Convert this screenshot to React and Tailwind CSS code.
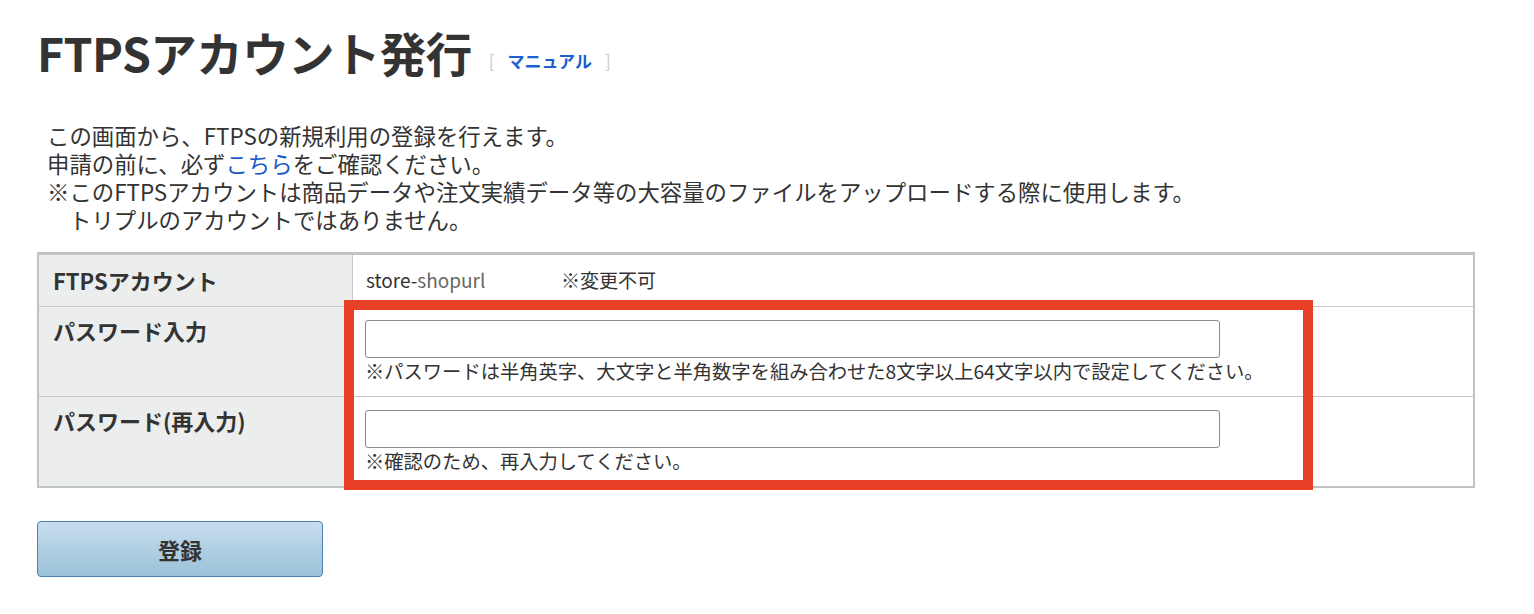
const rows = [
  { label: "パスワード入力", hint: "※パスワードは半角英字、大文字と半角数字を組み合わせた8文字以上64文字以内で設定してください。" },
  { label: "パスワード(再入力)", hint: "※確認のため、再入力してください。" },
]

const App = () => {
  return (
    <div className="min-h-[614px] w-[1534px] bg-white text-[#333] font-['Noto_Sans_CJK_JP',sans-serif]">
      <div className="pl-[37px] pt-[24px]">
        {/* title */}
        <div className="flex items-end">
          <h1 className="text-[46.5px] font-bold leading-[56px] tracking-[-0.6px] text-[#333]">FTPSアカウント発行</h1>
          <div className="ml-[17px] mb-[7px] flex items-center text-[17px] leading-[24px]">
            <span className="text-[#c9cccc]">[</span>
            <a href="#" className="mx-[13px] font-bold text-[#1d5fd1]">マニュアル</a>
            <span className="text-[#c9cccc]">]</span>
          </div>
        </div>

        {/* description */}
        <div className="mt-[41px] pl-[10px] text-[22.4px] leading-[28px] text-[#333]">
          <p>この画面から、FTPSの新規利用の登録を行えます。</p>
          <p>
            申請の前に、必ず<a href="#" className="text-[#1a57c8]">こちら</a>をご確認ください。
          </p>
          <p>※このFTPSアカウントは商品データや注文実績データ等の大容量のファイルをアップロードする際に使用します。</p>
          <p className="pl-[22px]">トリプルのアカウントではありません。</p>
        </div>

        {/* form table */}
        <div className="relative mt-[19px] w-[1438px]">
          <div className="border-2 border-t-[3px] border-[#bfc3c2]">
            <div className="grid grid-cols-[314px_1fr] border-b border-[#c8c8c8]">
              <div className="flex h-[51px] items-center border-r border-[#c8c8c8] bg-[#eceeee] pl-[14px] text-[22px] font-bold">
                FTPSアカウント
              </div>
              <div className="flex items-center pl-[13px] text-[19px]">
                <span className="w-[195px]">
                  store-<span className="text-[#666]">shopurl</span>
                </span>
                <span>※変更不可</span>
              </div>
            </div>
            {rows.map((row, i) => (
              <div
                key={row.label}
                className={i === 0 ? "grid grid-cols-[314px_1fr] border-b border-[#c8c8c8]" : "grid grid-cols-[314px_1fr]"}
              >
                <div className="border-r border-[#c8c8c8] bg-[#eceeee] pl-[14px] pt-[9px] text-[22px] font-bold leading-[28px]">
                  {row.label}
                </div>
                <div className="pl-[12px] pt-[13px] pb-[12px]">
                  <input
                    type="password"
                    className="block h-[38px] w-[855px] rounded-[3px] border border-[#8a8a8a] bg-white"
                  />
                  <p className="text-[19.3px] leading-[26px]">{row.hint}</p>
                </div>
              </div>
            ))}
          </div>

          {/* annotation frame */}
          <div className="pointer-events-none absolute left-[307px] top-[48px] h-[190px] w-[969px] border-[10px] border-[#e84027]" />
        </div>

        <button className="mt-[33px] h-[56px] w-[286px] rounded-[4px] border border-[#4f7fae] bg-gradient-to-b from-[#c6deee] to-[#9bc1d8] text-[22px] font-bold text-[#333]">
          登録
        </button>
      </div>
    </div>
  )
}

export default App
